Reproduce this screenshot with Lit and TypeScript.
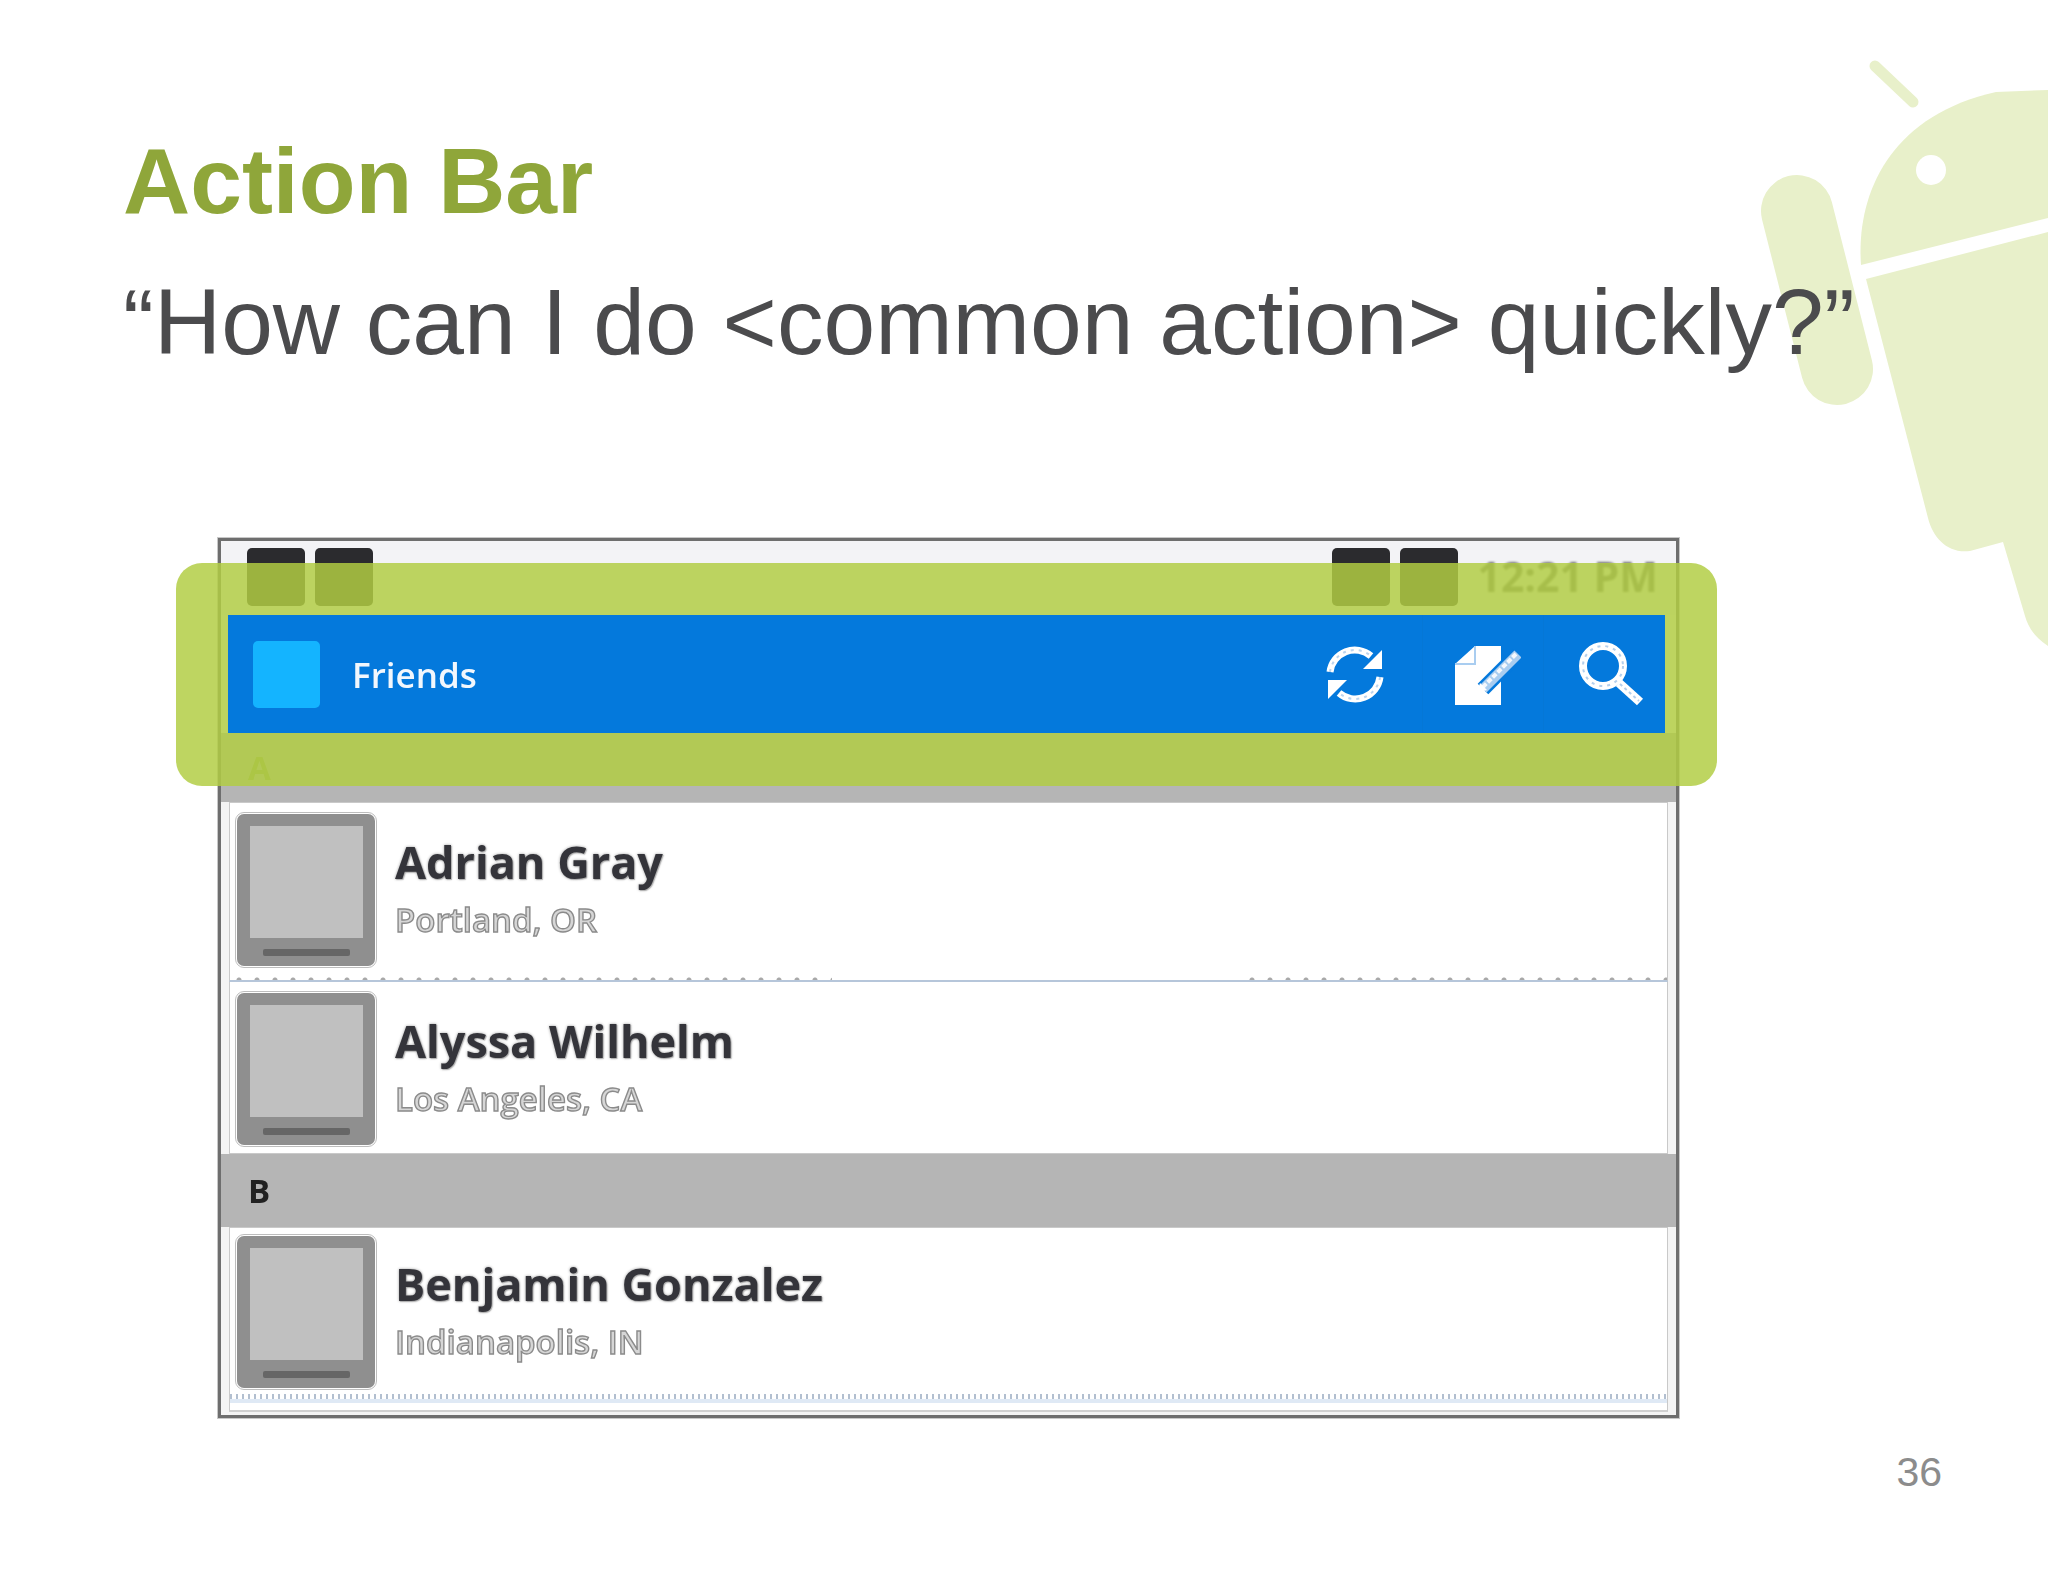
import { css, html, LitElement, svg } from 'lit'
import { customElement } from 'lit/decorators.js'

const friends = [
  { kind: 'row', cls: 'first', name: 'Adrian Gray', place: 'Portland, OR' },
  { kind: 'ticks' },
  { kind: 'row', cls: 'second', name: 'Alyssa Wilhelm', place: 'Los Angeles, CA' },
  { kind: 'section', cls: 'b', letter: 'B' },
  { kind: 'row', cls: 'third', name: 'Benjamin Gonzalez', place: 'Indianapolis, IN' },
  { kind: 'wave' },
]

const android = svg`
  <svg class="android" viewBox="0 0 300 620" width="300" height="620">
    <g fill="#e8f0ca">
      <path d="M127 20 L165 56" stroke="#e8f0ca" stroke-width="11" stroke-linecap="round" />
      <path d="M113 219 C108 150 140 70 248 46 L300 44 V172 Z" />
      <path d="M118 233 L300 186 V600 C285 590 280 580 277 570 L255 496 L222 505 C200 508 185 492 180 472 Z" />
      <path d="M49 165 L89 323" stroke="#e8f0ca" stroke-width="72" stroke-linecap="round" />
    </g>
    <circle cx="183" cy="124" r="15" fill="#fff" />
  </svg>
`

const refreshIcon = svg`
  <svg viewBox="0 0 60 61" width="60" height="61" fill="none">
    <path d="M5 28 A25 25 0 0 1 46 12" stroke="#fff" stroke-width="7" />
    <path d="M57 6 V25 H38 Z" fill="#fff" />
    <path d="M55 33 A25 25 0 0 1 14 49" stroke="#fff" stroke-width="7" />
    <path d="M3 55 V36 H22 Z" fill="#fff" />
    <path d="M5 28 A25 25 0 0 1 46 12 M55 33 A25 25 0 0 1 14 49" stroke="#bcd4ee" stroke-width="2" stroke-dasharray="3 5" />
  </svg>
`

const composeIcon = svg`
  <svg viewBox="0 0 68 65" width="68" height="65" fill="none">
    <path d="M22 4 H48 V63 H2 V22 Z" fill="#fff" />
    <path d="M22 4 V22 H2" stroke="#a9cdf0" stroke-width="2" />
    <path d="M65 12 L30 47" stroke="#0479dc" stroke-width="15" />
    <path d="M65 12 L30 47" stroke="#a9cdf0" stroke-width="10" />
    <path d="M63 12 L30 45" stroke="#f4f8fd" stroke-width="4" stroke-dasharray="5 2" />
    <path d="M27 41 L24 51 L34 48 Z" fill="#fff" />
  </svg>
`

const searchIcon = svg`
  <svg viewBox="0 0 66 65" width="66" height="65" fill="none">
    <circle cx="25" cy="24" r="20" stroke="#fff" stroke-width="8" />
    <circle cx="25" cy="24" r="20" stroke="#b4cfec" stroke-width="2" stroke-dasharray="3 5" />
    <path d="M41 41 L62 60" stroke="#fff" stroke-width="9" />
    <path d="M42 42 L61 59" stroke="#b4cfec" stroke-width="2" stroke-dasharray="3 3" />
  </svg>
`

@customElement('app-root')
export class AppRoot extends LitElement {
  renderItem(item: any) {
    if (item.kind === 'ticks') {
      return html`
        <div class="ticks">
          <span class="dots left"></span>
          <span class="dots right"></span>
        </div>
      `
    }
    if (item.kind === 'wave') {
      return html`<div class="wave"></div>`
    }
    if (item.kind === 'section') {
      return html`<div class="section ${item.cls}"><span class="letter">${item.letter}</span></div>`
    }
    return html`
      <div class="row ${item.cls}">
        <div class="avatar"><div class="pic"></div><div class="slot"></div></div>
        <div class="info">
          <div class="name">${item.name}</div>
          <div class="place">${item.place}</div>
        </div>
      </div>
    `
  }

  render() {
    return html`
      ${android}
      <main class="slide">
        <h1>Action Bar</h1>
        <p class="lead">“How can I do &lt;common action&gt; quickly?”</p>
        <section class="phone">
          <div class="status">
            <span class="block"></span>
            <span class="block"></span>
            <span class="spacer"></span>
            <span class="block"></span>
            <span class="block"></span>
            <span class="time">12:21 PM</span>
          </div>
          <div class="highlight"></div>
          <div class="actionbar">
            <span class="logo"></span>
            <span class="title">Friends</span>
            <span class="spacer"></span>
            <span class="action refresh">${refreshIcon}</span>
            <span class="action compose">${composeIcon}</span>
            <span class="action search">${searchIcon}</span>
          </div>
          <div class="section a"><span class="letter">A</span></div>
          ${friends.map((item) => this.renderItem(item))}
        </section>
        <div class="page">36</div>
      </main>
    `
  }

  static styles = css`
    :host {
      display: block;
      position: relative;
      width: 2048px;
      height: 1582px;
      overflow: hidden;
      background: #fff;
      font-family: 'Liberation Sans', Arial, sans-serif;
    }

    .android {
      position: absolute;
      left: 1748px;
      top: 46px;
    }

    .slide {
      position: relative;
      padding: 128px 0 0 123px;
    }

    h1 {
      margin: 0;
      font-size: 93px;
      line-height: 107px;
      font-weight: 700;
      color: #8fa63a;
    }

    .lead {
      margin: 34px 0 0;
      font-size: 93px;
      line-height: 107px;
      color: #4b4b4d;
      white-space: nowrap;
    }

    .phone {
      position: relative;
      box-sizing: border-box;
      width: 1461px;
      height: 880px;
      margin: 162px 0 0 95px;
      border: 3px solid #6e6e6e;
      outline: 1px solid #c8c8c8;
      background: #f4f4f4;
      font-family: 'Open Sans', 'Noto Sans', sans-serif;
    }

    .status {
      display: flex;
      box-sizing: border-box;
      height: 74px;
      padding: 7px 18px 0 26px;
      gap: 10px;
      background: #f3f3f6;
    }

    .block {
      width: 58px;
      height: 58px;
      border-radius: 5px;
      background: #2b2b2e;
      filter: blur(0.6px);
    }

    .spacer {
      flex: 1;
    }

    .time {
      margin-left: 9px;
      font-size: 41px;
      line-height: 56px;
      font-weight: 700;
      color: #6f6f6f;
      filter: blur(0.8px);
    }

    .highlight {
      position: absolute;
      left: -45px;
      top: 22px;
      width: 1541px;
      height: 223px;
      border-radius: 26px;
      background: rgba(178, 205, 67, 0.84);
      z-index: 1;
    }

    .actionbar {
      position: relative;
      z-index: 2;
      display: flex;
      align-items: center;
      height: 118px;
      margin: 0 11px 0 7px;
      background: #0479dc;
    }

    .logo {
      width: 67px;
      height: 67px;
      margin-left: 25px;
      border-radius: 5px;
      background: #14b4ff;
    }

    .title {
      margin-left: 32px;
      font-size: 35px;
      font-weight: 600;
      color: #f2f7fd;
      filter: blur(0.7px);
    }

    .action {
      display: flex;
      align-items: center;
      justify-content: center;
      box-sizing: border-box;
      height: 100%;
      filter: blur(0.5px);
    }

    .action svg {
      display: block;
    }

    .refresh {
      width: 134px;
    }

    .compose {
      width: 121px;
      padding-left: 8px;
      border-left: 1px solid #0577d6;
    }

    .search {
      width: 122px;
      padding-left: 12px;
      border-left: 1px solid #0577d6;
    }

    .section {
      display: flex;
      align-items: center;
      padding-left: 27px;
      background: #b5b5b5;
    }

    .section.a {
      height: 69px;
    }

    .section.b {
      height: 73px;
    }

    .letter {
      font-size: 33px;
      font-weight: 700;
      color: #222;
      filter: blur(0.6px);
    }

    .section.a .letter {
      color: #8f9f50;
    }

    .row {
      display: flex;
      box-sizing: border-box;
      gap: 20px;
      margin: 0 8px;
      padding: 11px 0 0 7px;
      background: #fff;
      border: 1.5px solid #c9c9c9;
      border-left-width: 1px;
    }

    .row.first {
      height: 173px;
      border-bottom: none;
    }

    .row.second {
      height: 172px;
      border-top: none;
    }

    .row.third {
      height: 167px;
      padding-top: 8px;
      border-bottom: none;
    }

    .avatar {
      box-sizing: border-box;
      display: flex;
      flex-direction: column;
      align-items: center;
      width: 138px;
      height: 152px;
      padding-top: 12px;
      border-radius: 7px;
      background: #8f8f8f;
      outline: 1.5px solid #bdbdbd;
      outline-offset: 1px;
      filter: blur(0.6px);
    }

    .pic {
      width: 113px;
      height: 112px;
      background: #c0c0c0;
    }

    .slot {
      width: 87px;
      height: 7px;
      margin-top: 11px;
      border-radius: 2px;
      background: #666;
    }

    .info {
      margin-top: 20px;
    }

    .name {
      font-size: 45px;
      line-height: 55px;
      font-weight: 700;
      color: #34343a;
      white-space: nowrap;
      filter: blur(0.5px);
      text-shadow: 0 0 3px #9a9a9a, 1px 1px 1px #bbb;
    }

    .place {
      margin-top: 11px;
      font-size: 33px;
      line-height: 40px;
      font-weight: 600;
      color: #d6d6d6;
      -webkit-text-stroke: 1.4px #8b8b8b;
      white-space: nowrap;
      filter: blur(0.5px);
    }

    .ticks {
      display: flex;
      justify-content: space-between;
      height: 5px;
      margin: 0 8px;
      background: #fff;
      border-bottom: 2px solid #b6c6da;
      border-left: 1px solid #c9c9c9;
      border-right: 1.5px solid #c9c9c9;
    }

    .dots {
      height: 5px;
      background-image: radial-gradient(circle at 50% 100%, #a8a8a8 0 2px, transparent 3px);
      background-size: 18px 5px;
    }

    .dots.left {
      width: 602px;
    }

    .dots.right {
      width: 424px;
    }

    .wave {
      box-sizing: border-box;
      height: 18px;
      margin: 0 8px;
      background:
        repeating-linear-gradient(90deg, #b2bfd0 0 2px, transparent 2px 6px) 0 0 / 100% 5px no-repeat,
        linear-gradient(#dfe9f5, #dfe9f5) 0 5px / 100% 4px no-repeat,
        #fff;
      border-bottom: 2px solid #d0d0d0;
      border-left: 1px solid #c9c9c9;
      border-right: 1.5px solid #c9c9c9;
    }

    .page {
      margin: 31px 106px 0 0;
      text-align: right;
      font-size: 41px;
      line-height: 47px;
      color: #8c8c8c;
    }
  `
}
